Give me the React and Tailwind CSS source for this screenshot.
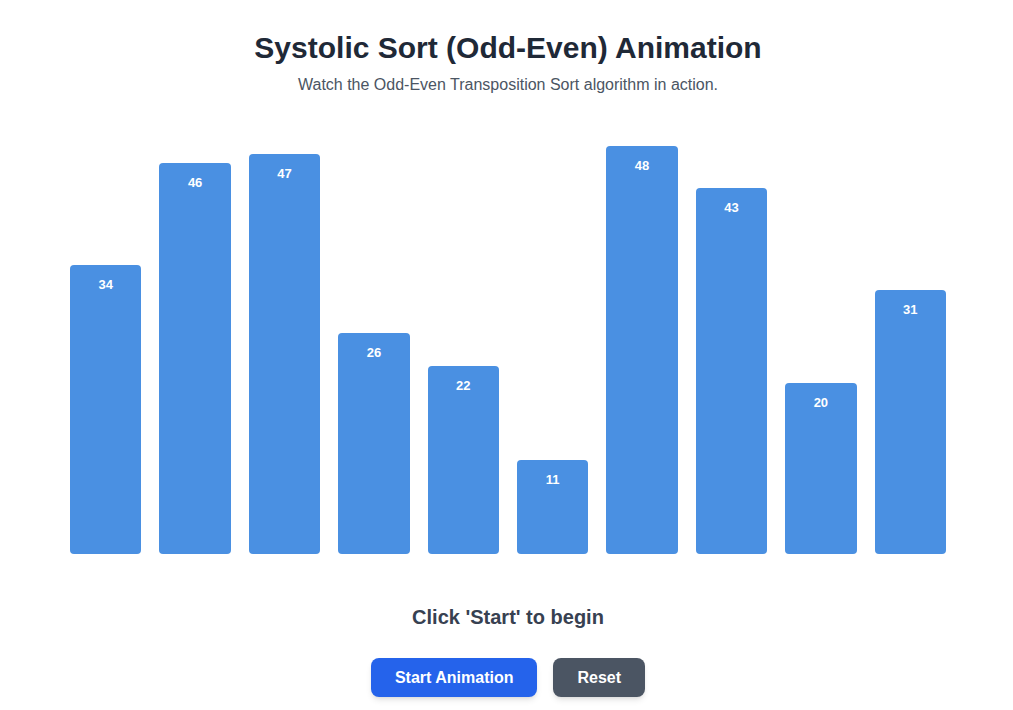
import React, { useState } from 'react';

const initial = [34, 46, 47, 26, 22, 11, 48, 43, 20, 31];

export default function App() {
  const [values] = useState(initial);

  return (
    <div className="min-h-screen bg-white flex flex-col items-center pt-[30px] pl-[3px]" style={{ fontFamily: '"Liberation Sans", Arial, sans-serif' }}>
      <h1 className="text-[30px] leading-9 font-bold text-[#1f2937]">Systolic Sort (Odd-Even) Animation</h1>
      <p className="mt-[7px] text-base leading-6 text-[#4b5563]">Watch the Odd-Even Transposition Sort algorithm in action.</p>

      <div className="mt-[32px] h-[425px] flex items-end justify-center gap-[17.9px]">
        {values.map((v, i) => (
          <div
            key={i}
            className="w-[71.5px] bg-[#4a90e2] rounded-[4px] flex justify-center pt-[12px]"
            style={{ height: `${v * 8.48 + 1}px` }}
          >
            <span className="text-[13px] leading-[15px] font-bold text-white">{v}</span>
          </div>
        ))}
      </div>

      <div className="mt-[49px] text-[20px] leading-7 font-bold text-[#374151]">Click 'Start' to begin</div>

      <div className="mt-[27px] flex gap-4">
        <button className="px-6 py-2 leading-[23px] rounded-lg bg-[#2563eb] text-white font-bold text-base shadow-md">Start Animation</button>
        <button className="px-6 py-2 leading-[23px] rounded-lg bg-[#4b5563] text-white font-bold text-base shadow-md">Reset</button>
      </div>
    </div>
  );
}
